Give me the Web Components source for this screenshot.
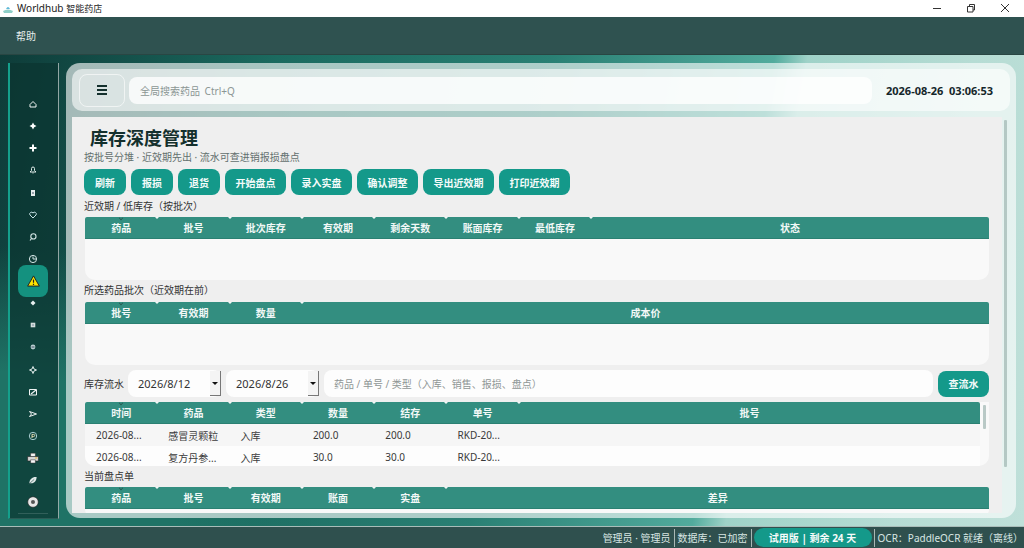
<!DOCTYPE html>
<html lang="zh">
<head>
<meta charset="utf-8">
<title>Worldhub 智能药店</title>
<style>
  html, body { margin: 0; height: 100%; overflow: hidden; }
  body { font: 10px "Noto Sans", "Noto Sans CJK SC", sans-serif; color: #333; }
</style>
</head>
<body>
<wh-app></wh-app>

<script>
// small helper so every element gets an open shadow root with its own styles
class WhBase extends HTMLElement {
  constructor() {
    super();
    this.shadow = this.attachShadow({ mode: 'open' });
  }
}

class WhTitlebar extends WhBase {
  connectedCallback() {
    this.shadow.innerHTML = `
      <style>
        :host { display: flex; align-items: center; height: 17px; background: #fff; color: #222; flex-shrink: 0; }
        .logo { width: 10px; height: 10px; margin: 0 4px 0 3px; }
        .name { flex: 1; font-size: 10px; line-height: 17px; }
        .name span { font-size: 9px; }
        .ctl { width: 34px; height: 15px; margin-bottom: 2px; display: flex; align-items: center; justify-content: center; }
        .ctl svg { width: 10px; height: 10px; }
        .ctls { display: flex; padding-right: 2px; }
      </style>
      <svg class="logo" viewBox="0 0 10 10">
        <path d="M3 5 Q5 1 7 5Z" fill="#5fb8d8"/>
        <path d="M0 7 Q5 4 10 7 L9 9 H1Z" fill="#8fcfc8"/>
      </svg>
      <div class="name">Worldhub <span>智能药店</span></div>
      <div class="ctls">
        <div class="ctl"><svg viewBox="0 0 10 10"><path d="M1 5.5H9" stroke="#333" fill="none"/></svg></div>
        <div class="ctl"><svg viewBox="0 0 10 10"><path d="M1.5 3.5H7V9H1.5Z M3.5 3.5V1.5H8.5V7H7" stroke="#333" fill="none"/></svg></div>
        <div class="ctl"><svg viewBox="0 0 10 10"><path d="M1 1L9 9M9 1L1 9" stroke="#333" fill="none"/></svg></div>
      </div>`;
  }
}

class WhMenubar extends WhBase {
  connectedCallback() {
    this.shadow.innerHTML = `
      <style>
        :host { display: flex; align-items: center; height: 38px; padding-left: 16px; background: #2f5250;
                color: #e6eeec; font-size: 10px; flex-shrink: 0; border-bottom: 1px solid #294643; box-sizing: border-box; }
      </style>
      <slot></slot>`;
  }
}

class WhSidebar extends WhBase {
  connectedCallback() {
    const w = 'stroke="#f4f8f7" fill="none"';
    const icons = [
      `<path d="M2 5.5L5 2.5L8 5.5V8H2Z" ${w}/>`,
      `<path d="M5 1.5L6.2 3.8L8.5 5L6.2 6.2L5 8.5L3.8 6.2L1.5 5L3.8 3.8Z" fill="#fff"/>`,
      `<path d="M4 1.5H6V4H8.5V6H6V8.5H4V6H1.5V4H4Z" fill="#fff"/>`,
      `<path d="M3.5 5.5V3.5A1.5 1.5 0 0 1 6.5 3.5V5.5L8 7H2Z M4.5 8H5.5" stroke="#dfeae8" fill="none"/>`,
      `<path d="M3 2H7V8H3Z" fill="#e8eeee"/><path d="M4 5H6" stroke="#456"/>`,
      `<path d="M5 8L2 5A1.7 1.7 0 0 1 5 3A1.7 1.7 0 0 1 8 5Z" stroke="#c7e2e6" fill="none"/>`,
      `<circle cx="5.4" cy="4.4" r="2.6" stroke="#d5e6e6" stroke-width="1.1" fill="none"/><path d="M3.5 6.5L2 8.5" stroke="#d5e6e6" stroke-width="1.1"/>`,
      `<circle cx="5" cy="5" r="3.6" stroke="#d5e6e6" fill="none"/><path d="M5 2.5V5H8" stroke="#d5e6e6" fill="none"/>`,
      null,
      `<path d="M5 2.5L7.5 5L5 7.5L2.5 5Z" fill="#e8f0ef"/>`,
      `<path d="M2.7 2.7H7.3V7.3H2.7Z" fill="#d4dedd"/><path d="M4 5H6" stroke="#789"/>`,
      `<circle cx="5" cy="5" r="2.4" fill="#b9cdd0"/><path d="M3.5 5H6.5" stroke="#456"/>`,
      `<path d="M5 1.5L6 4L8.5 5L6 6L5 8.5L4 6L1.5 5L4 4Z" stroke="#e0ecea" fill="none"/>`,
      `<path d="M1.5 2.5H8.5V8H1.5Z" stroke="#f0f4f4" fill="none"/><path d="M3 7L8 3" stroke="#f0f4f4" stroke-width="1.2"/>`,
      `<path d="M1.5 2.5L8.5 5L1.5 7.5L3.5 5Z" stroke="#f0f4f4" fill="none"/>`,
      `<circle cx="5" cy="5" r="3.7" stroke="#a8ccd0" fill="none"/><path d="M4 7V3.4H5.6A1.1 1.1 0 0 1 5.6 5.6H4" stroke="#e0d8b0" fill="none"/>`,
      `<path d="M3 1H7V4H3Z" fill="#f3f3f3" stroke="#222" stroke-width=".4"/><path d="M.5 3.8H9.5V7.5H.5Z" fill="#d8d8d8" stroke="#222" stroke-width=".5"/><path d="M3 6.5H7V9.2H3Z" fill="#f8f8f8" stroke="#222" stroke-width=".4"/><path d="M6.8 5H8.4" stroke="#e8b840"/>`,
      `<path d="M2 7.5C2 4 5 2 8 2.5C8 6 5.5 8.5 2 7.5Z" fill="#dfe9e8"/><path d="M1.5 8.5L6 4.5" stroke="#3a5f5b" stroke-width=".6"/>`,
      `<circle cx="5" cy="5" r="4.4" fill="#e8e8e8" stroke="#222" stroke-width=".5"/><circle cx="5" cy="5" r="1.7" fill="#555"/>`
    ];
    this.shadow.innerHTML = `
      <style>
        :host { display: flex; flex-direction: column; align-items: center; width: 51px; height: 456px; margin: 8px 0 0 8px;
                box-sizing: border-box; flex-shrink: 0; padding: 30px 2px 0 0;
                background: rgba(11,52,49,.72); border-left: 2px solid #14a08c;
                border-right: 1px solid rgba(255,255,255,.55); border-bottom: 1px solid rgba(255,255,255,.12); }
        .item { width: 30px; height: 22.15px; flex-shrink: 0; display: flex; align-items: center; justify-content: center; }
        .item svg { width: 10px; height: 10px; }
        .item.large svg { width: 12px; height: 12px; }
        .active { height: 32px; margin: -5px 0; border-radius: 8px; background: #14917f; position: relative; }
        .active svg { width: 13px; height: 12px; }
        .foot { width: 30px; height: 1px; background: rgba(255,255,255,.14); margin-top: -1px; }
      </style>
      ${icons.map((p, i) => p
        ? `<div class="item ${i >= 16 ? 'large' : ''}"><svg viewBox="0 0 10 10">${p}</svg></div>`
        : `<div class="item active"><svg viewBox="0 0 12 11"><path d="M6 .8L11.4 10.2H.6Z" fill="#ffe600" stroke="#222" stroke-width=".9"/><path d="M6 4V7.2M6 8.1V9.1" stroke="#222" stroke-width="1.1"/></svg></div>`
      ).join('')}
      <div class="foot"></div>`;
  }
}

class WhTopbar extends WhBase {
  connectedCallback() {
    this.shadow.innerHTML = `
      <style>
        :host { display: flex; align-items: center; height: 42px; box-sizing: border-box; padding: 0 17px 0 7px;
                border-radius: 10px; background: rgba(255,255,255,.58); flex-shrink: 0; }
        .menu { width: 46px; height: 33px; box-sizing: border-box; border: 1px solid rgba(255,255,255,.6); border-radius: 8px;
                display: flex; flex-direction: column; gap: 2px; align-items: center; justify-content: center; margin-right: 4px; }
        .menu i { display: block; width: 10px; height: 2px; background: #14302d; }
        .search { flex: 1; height: 27px; border-radius: 8px; background: rgba(255,255,255,.78); color: #8b9694;
                  padding-left: 11px; display: flex; align-items: center; font-size: 10px; word-spacing: 2px; }
        .time { margin-left: 14px; font-size: 11px; font-weight: 700; color: #14262a; white-space: pre; }
      </style>
      <div class="menu"><i></i><i></i><i></i></div>
      <div class="search">全局搜索药品  Ctrl+Q</div>
      <div class="time">2026-08-26  03:06:53</div>`;
  }
}

class WhButton extends WhBase {
  connectedCallback() {
    this.shadow.innerHTML = `
      <style>
        :host { display: inline-flex; align-items: center; justify-content: center; height: 26px; min-width: 42px; box-sizing: border-box;
                padding: 0 10.5px; border-radius: 8px; background: #14998a; color: #f4fbfa; font-size: 10px; font-weight: 700;
                white-space: nowrap; flex-shrink: 0; }
      </style>
      <slot></slot>`;
  }
}

// cols: widths of the fixed columns, last one stretches. rows are optional.
class WhTable extends WhBase {
  set data(val) { this._data = val; this.render(); }

  render() {
    const { cols, rows = [], width = 72.3, body = 41, scroll = false } = this._data;
    const grid = `repeat(${cols.length - 1}, ${width}px) 1fr`;
    this.shadow.innerHTML = `
      <style>
        :host { display: block; margin-left: 1px; width: 904px; position: relative; flex-shrink: 0; }
        .wrap { height: ${22 + body}px; border-radius: 0 0 10px 10px; background: #f9f9f9; overflow: hidden; }
        .head { display: grid; grid-template-columns: ${grid}; height: 22px; background: #338e80; border-bottom: 1px solid #2b8072;
                box-sizing: border-box; color: #f2f8f7; font-weight: 700; border-radius: 2px 2px 0 0; ${scroll ? 'margin-right: 9px;' : ''} }
        .head div { position: relative; display: flex; align-items: center; justify-content: center; }
        .head div:not(:last-child)::after { content: ""; position: absolute; right: -2px; top: 0;
                border: 2px solid transparent; border-top-color: #f2f8f7; border-bottom: 0; }
        .head div:first-child::before { content: ""; position: absolute; left: 50%; top: 0; width: 3px; height: 3px; margin-left: -2px;
                border: solid #24564f; border-width: 0 1px 1px 0; transform: translateY(-1px) rotate(45deg) scale(.8); }
        .row { display: grid; grid-template-columns: ${grid}; height: 22px; margin-top: 0; align-items: center;
               ${scroll ? 'margin-right: 9px;' : ''} color: #3a3a3a; }
        .row:nth-child(even) { background: #f6f6f6; }
        .row:nth-child(odd) { background: #fdfdfd; }
        .row div { padding-left: 11px; white-space: nowrap; height: 100%; display: flex; align-items: center; box-sizing: border-box; }
        .bar { position: absolute; right: 3px; top: 3px; width: 3px; height: 24px; background: #b9c9c6; border-radius: 1px; }
      </style>
      <div class="wrap">
        <div class="head">${cols.map(c => `<div>${c}</div>`).join('')}</div>
        ${rows.map(r => `<div class="row">${r.map(c => `<div>${c}</div>`).join('')}</div>`).join('')}
      </div>
      ${scroll ? '<div class="bar"></div>' : ''}`;
  }
}

class WhDateInput extends WhBase {
  connectedCallback() {
    this.shadow.innerHTML = `
      <style>
        :host { display: flex; align-items: center; width: 93px; height: 27px; box-sizing: border-box; padding-left: 10px;
                background: #fdfdfd; border-radius: 8px; font-size: 11px; color: #333; position: relative; flex-shrink: 0; }
        .arrow { position: absolute; right: 0; top: 1px; width: 11px; height: 25px; background: #f4f4f4;
                 border-right: 1px solid #777; border-bottom: 1px solid #777; box-sizing: border-box;
                 display: flex; align-items: center; justify-content: center; }
        .arrow::after { content: ""; border: 3px solid transparent; border-top-color: #111; border-bottom: 0; }
      </style>
      <slot></slot><div class="arrow"></div>`;
  }
}

class WhInventory extends WhBase {
  connectedCallback() {
    this.shadow.innerHTML = `
      <style>
        :host { display: flex; flex-direction: column; flex: 1; min-height: 0; overflow: hidden; background: #efefef;
                padding: 9px 13px 0 12px; box-sizing: border-box; font-size: 10px; color: #333; }
        h1 { margin: 0 0 0 6px; font-size: 18px; line-height: 24px; font-weight: 700; color: #14302d; }
        .sub { color: #63706e; line-height: 14px; margin-top: 0; }
        .btns { display: flex; gap: 5px; margin-top: 5px; }
        .label { line-height: 14px; color: #333; white-space: nowrap; }
        .l1 { margin: 4px 0 4px; }
        .l2 { margin: 3px 0 5px; }
        .flow { display: flex; align-items: center; gap: 5px; height: 27px; margin: 5px 0 5px; }
        .flow span { width: 39px; flex-shrink: 0; white-space: nowrap; }
        .kw { flex: 1; height: 27px; border-radius: 8px; background: #fdfdfd; color: #8f9695; display: flex; align-items: center; padding-left: 10px; }
        .l3 { margin: 3px 0 4px; }
      </style>
      <h1>库存深度管理</h1>
      <div class="sub">按批号分堆 · 近效期先出 · 流水可查进销报损盘点</div>
      <div class="btns">
        <wh-button>刷新</wh-button><wh-button>报损</wh-button><wh-button>退货</wh-button>
        <wh-button>开始盘点</wh-button><wh-button>录入实盘</wh-button><wh-button>确认调整</wh-button>
        <wh-button>导出近效期</wh-button><wh-button>打印近效期</wh-button>
      </div>
      <div class="label l1">近效期 / 低库存（按批次）</div>
      <wh-table id="t1"></wh-table>
      <div class="label l2">所选药品批次（近效期在前）</div>
      <wh-table id="t2"></wh-table>
      <div class="flow">
        <span>库存流水</span>
        <wh-date-input>2026/8/12</wh-date-input>
        <wh-date-input>2026/8/26</wh-date-input>
        <div class="kw">药品 / 单号 / 类型（入库、销售、报损、盘点）</div>
        <wh-button>查流水</wh-button>
      </div>
      <wh-table id="t3"></wh-table>
      <div class="label l3">当前盘点单</div>
      <wh-table id="t4"></wh-table>`;

    this.shadow.getElementById('t1').data = {
      cols: ['药品', '批号', '批次库存', '有效期', '剩余天数', '账面库存', '最低库存', '状态'], body: 41
    };
    this.shadow.getElementById('t2').data = {
      cols: ['批号', '有效期', '数量', '成本价'], body: 41
    };
    this.shadow.getElementById('t3').data = {
      cols: ['时间', '药品', '类型', '数量', '结存', '单号', '批号'], body: 42, scroll: true,
      rows: [
        ['2026-08...', '感冒灵颗粒', '入库', '200.0', '200.0', 'RKD-20...', ''],
        ['2026-08...', '复方丹参...', '入库', '30.0', '30.0', 'RKD-20...', '']
      ]
    };
    this.shadow.getElementById('t4').data = {
      cols: ['药品', '批号', '有效期', '账面', '实盘', '差异'], body: 10
    };
  }
}

class WhPanel extends WhBase {
  connectedCallback() {
    this.shadow.innerHTML = `
      <style>
        :host { display: flex; flex-direction: column; flex: 1; min-width: 0; height: 455px; margin: 8px 8px 0 7px; padding: 6px 6px 5px;
                box-sizing: border-box; border-radius: 14px; background: rgba(255,255,255,.62); }
        .scroll { flex: 1; min-height: 0; display: flex; margin-top: 6px; }
        .track { width: 8px; position: relative; flex-shrink: 0; }
        .thumb { position: absolute; left: 2px; top: 3px; width: 3px; height: 347px; background: #b4c8c4; border-radius: 1px; }
      </style>
      <wh-topbar></wh-topbar>
      <div class="scroll"><wh-inventory></wh-inventory><div class="track"><div class="thumb"></div></div></div>`;
  }
}

class WhStatusbar extends WhBase {
  connectedCallback() {
    this.shadow.innerHTML = `
      <style>
        :host { display: flex; align-items: center; justify-content: flex-end; height: 22px; padding-right: 0; background: #2f504e;
                border-top: 1px solid #a9bdb9; box-sizing: border-box; color: #d8e6e3; font-size: 10px; flex-shrink: 0; }
        .sep { width: 1px; height: 18px; background: #a8b8b5; margin: 0 2px; }
        .pill { width: 118px; height: 19px; border-radius: 10px; background: #14998a; color: #f6fbfa; font-weight: 700;
                display: flex; align-items: center; justify-content: center; }
        .txt { padding: 0 1px; white-space: nowrap; }
      </style>
      <div class="txt">管理员 · 管理员</div><div class="sep"></div>
      <div class="txt">数据库：已加密</div><div class="sep"></div>
      <div class="pill">试用版 | 剩余 24 天</div><div class="sep"></div>
      <div class="txt">OCR：PaddleOCR 就绪（离线）</div>`;
  }
}

class WhApp extends WhBase {
  connectedCallback() {
    this.shadow.innerHTML = `
      <style>
        :host { display: flex; flex-direction: column; width: 1024px; height: 548px; overflow: hidden; }
        .main { flex: 1; min-height: 0; display: flex; position: relative; overflow: hidden;
                background:
                  radial-gradient(ellipse 320px 280px at 0 100%, #1f7366 0%, #1f7366 55%, rgba(31,115,102,0) 100%),
                  linear-gradient(100deg, #0e3c39 0%, #1b6a5f 25%, #2a8074 50%, #52ab9d 70%, #9fd2c8 73%, #b6dcd4 88%, #bfe0d9 100%); }
        .main > * { position: relative; }
      </style>
      <wh-titlebar></wh-titlebar>
      <wh-menubar>帮助</wh-menubar>
      <div class="main"><wh-sidebar></wh-sidebar><wh-panel></wh-panel></div>
      <wh-statusbar></wh-statusbar>`;
  }
}

customElements.define('wh-titlebar', WhTitlebar);
customElements.define('wh-menubar', WhMenubar);
customElements.define('wh-sidebar', WhSidebar);
customElements.define('wh-topbar', WhTopbar);
customElements.define('wh-button', WhButton);
customElements.define('wh-table', WhTable);
customElements.define('wh-date-input', WhDateInput);
customElements.define('wh-inventory', WhInventory);
customElements.define('wh-panel', WhPanel);
customElements.define('wh-statusbar', WhStatusbar);
customElements.define('wh-app', WhApp);
</script>
</body>
</html>
